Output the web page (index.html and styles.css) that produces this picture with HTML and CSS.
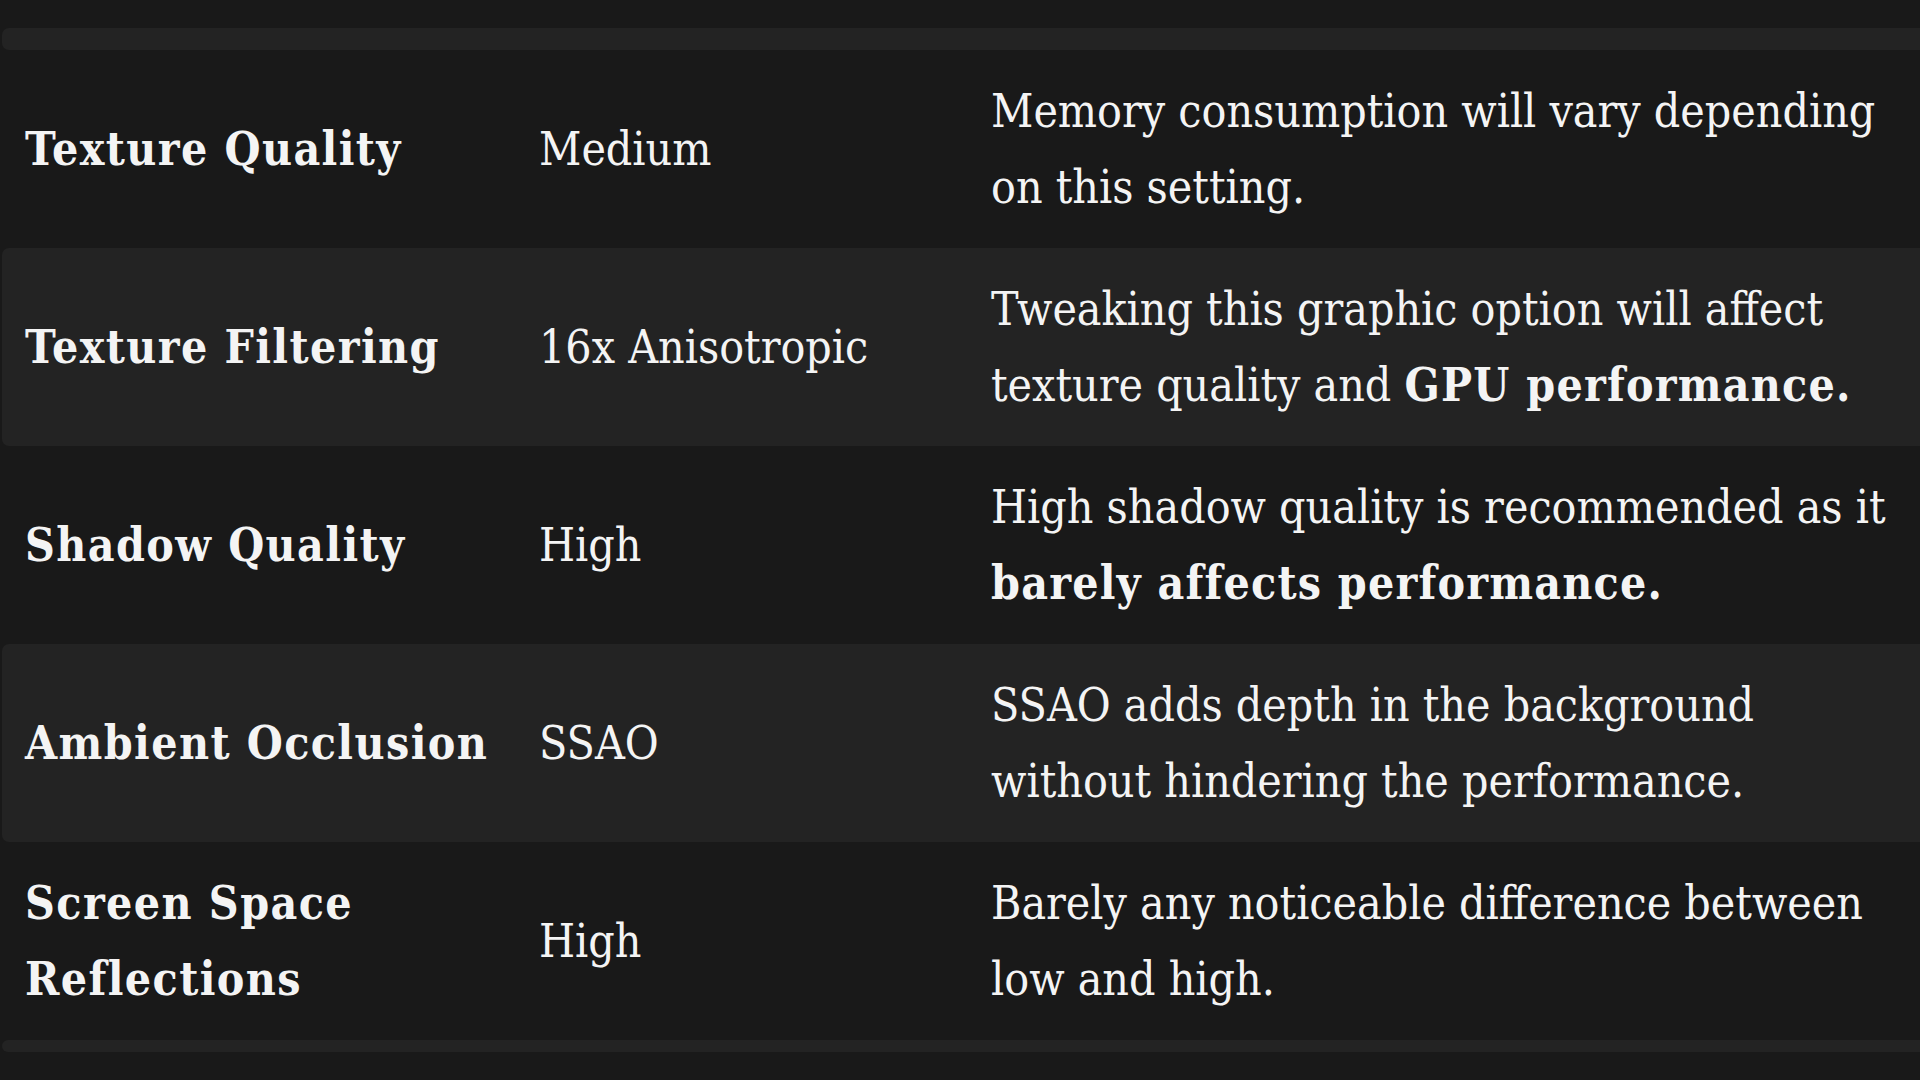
FILE: index.html
```html
<!DOCTYPE html>
<html lang="en">
<head>
<meta charset="utf-8">
<title>Graphics Settings</title>
<link rel="stylesheet" href="styles.css">
</head>
<body>
<div class="page">
  <div class="strip strip-top"></div>
  <div class="table">
    <div class="row">
      <div class="cell name">Texture Quality</div>
      <div class="cell value">Medium</div>
      <div class="cell desc">Memory consumption will vary depending on this setting.</div>
    </div>
    <div class="row alt">
      <div class="cell name">Texture Filtering</div>
      <div class="cell value">16x Anisotropic</div>
      <div class="cell desc">Tweaking this graphic option will affect texture quality and <b>GPU performance.</b></div>
    </div>
    <div class="row">
      <div class="cell name">Shadow Quality</div>
      <div class="cell value">High</div>
      <div class="cell desc">High shadow quality is recommended as it <b>barely affects performance.</b></div>
    </div>
    <div class="row alt">
      <div class="cell name">Ambient Occlusion</div>
      <div class="cell value">SSAO</div>
      <div class="cell desc">SSAO adds depth in the background without hindering the performance.</div>
    </div>
    <div class="row">
      <div class="cell name">Screen Space Reflections</div>
      <div class="cell value">High</div>
      <div class="cell desc">Barely any noticeable difference between low and high.</div>
    </div>
  </div>
  <div class="strip strip-bottom"></div>
</div>
</body>
</html>
```

FILE: styles.css
```css
html, body {
  margin: 0;
  padding: 0;
  background: #191919;
}
body {
  font-family: "DejaVu Serif Condensed", "DejaVu Serif", "Liberation Serif", serif;
  font-stretch: condensed;
  color: #f4f4f4;
  overflow: hidden;
}
.page {
  width: 1920px;
  height: 1080px;
  padding-top: 28px;
  box-sizing: border-box;
}
.strip {
  background: #232323;
  margin-left: 2px;
  border-radius: 7px 0 0 7px;
}
.strip-top {
  height: 22px;
}
.strip-bottom {
  height: 12px;
}
.row {
  display: grid;
  grid-template-columns: 514px 452px 1fr;
  align-items: center;
  height: 198px;
  margin-left: 2px;
  border-radius: 7px 0 0 7px;
}
.row.alt {
  background: #232323;
}
.cell {
  padding: 0 20px 0 23px;
  font-size: 46px;
  line-height: 76px;
}
.name {
  font-weight: bold;
  letter-spacing: 1.4px;
}
.desc b {
  font-weight: bold;
  letter-spacing: 1.2px;
}
```
